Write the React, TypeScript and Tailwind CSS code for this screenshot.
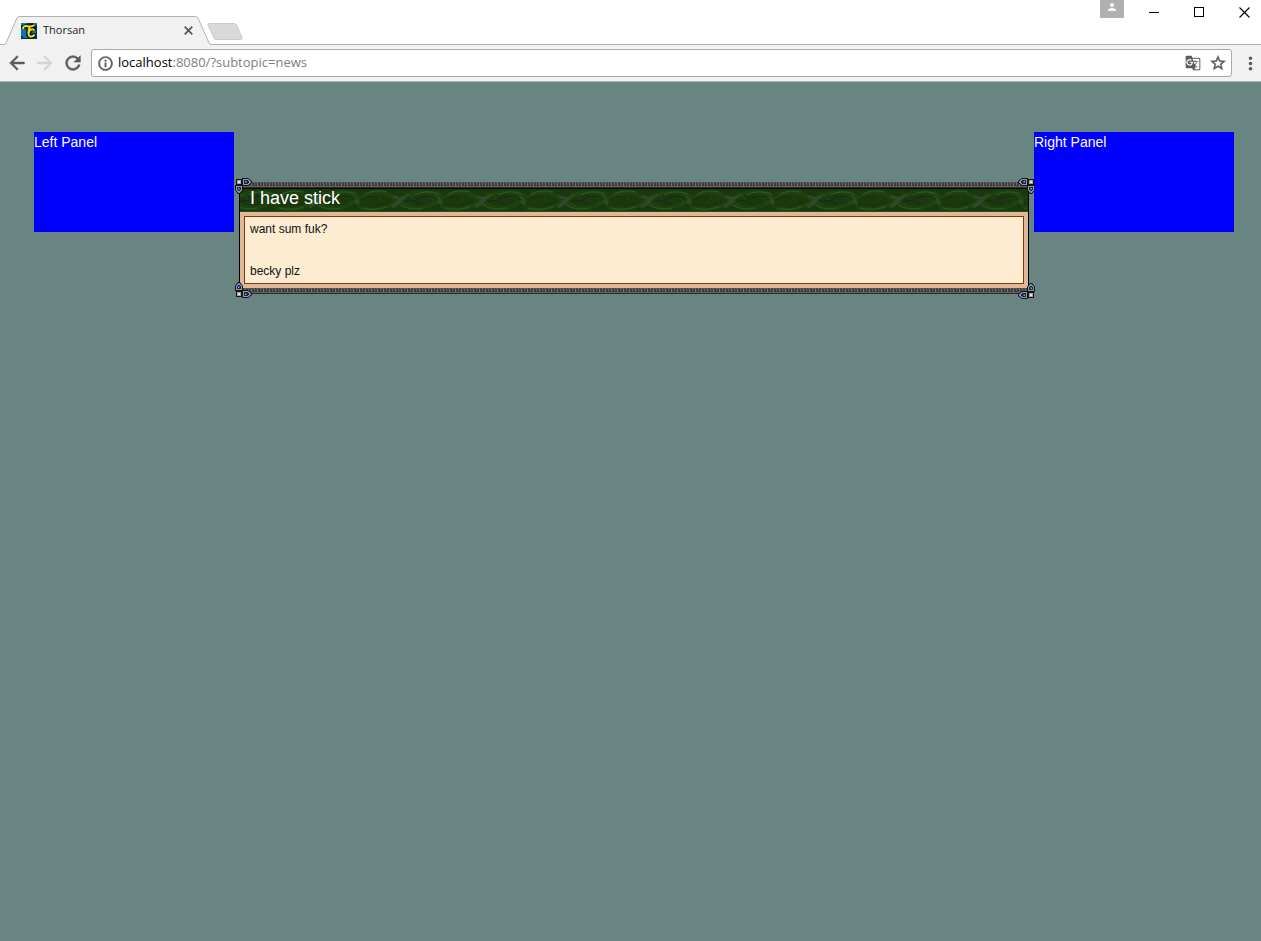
import { useState } from 'react'
import type { ReactNode } from 'react'
import {
  MdArrowBack,
  MdArrowForward,
  MdGTranslate,
  MdInfoOutline,
  MdMoreVert,
  MdPerson,
  MdRefresh,
  MdStarBorder,
} from 'react-icons/md'

const newsItem = {
  title: 'I have stick',
  lines: ['want sum fuk?', '', '', 'becky plz'],
}

// The first path of a material icon is its empty bounding box, which must not get the stroke
const boldIcon = {
  strokeWidth: 0.6,
  className: '[&>path:first-child]:hidden',
}

function Favicon() {
  return (
    <svg width="16" height="16" viewBox="0 0 16 16" aria-hidden="true">
      <rect width="16" height="16" fill="#04304c" />
      <path d="M0 6h5v7h-5zM0 0h6v2h-6zM11 8h4v2h-4zM12 0h4v2h-4zM2 13h4v2h-4z" fill="#0878b0" />
      <g fill="none" stroke="#0a0a00" strokeWidth="3.600">
        <path d="M2 6C2 3.500 4 2.700 6.500 3.200S11 3.800 13.500 2" />
        <path d="M13.500 7.500C12 5.500 8 6 7.500 10C7.300 13 9 13.800 10.500 13.500S13 12.500 13.500 11.500" />
      </g>
      <g fill="none" stroke="#f7dc12" strokeWidth="2">
        <path d="M2 6C2 3.500 4 2.700 6.500 3.200S11 3.800 13.500 2" />
        <path d="M8.500 3.500L7.500 10" />
        <path d="M13.500 7.500C12 5.500 8 6 7.500 10C7.300 13 9 13.800 10.500 13.500S13 12.500 13.500 11.500" />
      </g>
    </svg>
  )
}

function TabStrip() {
  return (
    <div className="flex h-[45px] justify-between border-b border-[#b0b0b0] bg-white">
      <div className="flex items-end pl-1">
        <div className="relative -mb-px h-[29px] w-[207px]">
          <svg
            className="absolute inset-0"
            width="207"
            height="29"
            viewBox="0 0 207 29"
            aria-hidden="true"
          >
            <path d="M0 29L2 27L13 2Q14 .5 15.500 .5H191.500Q193 .5 194 2L205 27L207 29Z" fill="#f1f1f1" />
            <path
              d="M0 28.500Q1.500 28.500 2 27L13 2Q14 .5 15.500 .5H191.500Q193 .5 194 2L205 27Q206 28.500 207 28.500"
              fill="none"
              stroke="#b0b0b0"
            />
          </svg>
          <div className="relative flex h-full items-center pr-[18px] pl-[17px] font-['Open_Sans',sans-serif] text-[11px] text-[#222]">
            <Favicon />
            <span className="ml-1.5 flex-1">Thorsan</span>
            <button type="button" aria-label="Close tab">
              <svg width="9" height="9" viewBox="0 0 9 9" aria-hidden="true">
                <path d="M.7 .7L8.300 8.300M8.300 .7L.7 8.300" stroke="#555" strokeWidth="1.700" />
              </svg>
            </button>
          </div>
        </div>
        <button type="button" aria-label="New tab" className="-ml-1 pb-1">
          <svg width="36" height="17" viewBox="0 0 36 17" aria-hidden="true">
            <path
              d="M2.500 .5H27Q29 .5 29.500 2L35 14.500Q35.500 16.500 33.500 16.500H9Q7.500 16.500 7 15L1 2Q.5 .5 2.500 .5Z"
              fill="#d9d9d9"
              stroke="#cacaca"
            />
          </svg>
        </button>
      </div>

      <div className="flex items-start pr-[11px]">
        <button
          type="button"
          aria-label="Profile"
          className="flex h-[18px] w-6 items-start justify-center bg-[#b0b0b0] pt-px text-white"
        >
          <MdPerson size={12} />
        </button>
        <div className="ml-[25px] flex gap-[34px] pt-[7px]">
          <button type="button" aria-label="Minimize">
            <svg width="11" height="11" aria-hidden="true">
              <path d="M0 5.500h10" stroke="#000" />
            </svg>
          </button>
          <button type="button" aria-label="Maximize">
            <svg width="11" height="11" aria-hidden="true">
              <rect x=".5" y=".5" width="9" height="9" fill="none" stroke="#000" />
            </svg>
          </button>
          <button type="button" aria-label="Close window">
            <svg width="11" height="11" aria-hidden="true">
              <path d="M.5 .5l10 10M10.500 .5l-10 10" stroke="#000" strokeWidth="1.100" />
            </svg>
          </button>
        </div>
      </div>
    </div>
  )
}

function Toolbar() {
  const [path, setPath] = useState(':8080/?subtopic=news')

  return (
    <div className="flex h-[37px] items-center border-b border-[#b6b4b6] bg-[#f1f1f1] pl-1.5 text-[#5a5a5a]">
      <div className="flex gap-1.5">
        <button type="button" aria-label="Back">
          <MdArrowBack size={22} {...boldIcon} />
        </button>
        <button type="button" aria-label="Forward" className="text-[#d3d3d3]">
          <MdArrowForward size={22} {...boldIcon} />
        </button>
        <button type="button" aria-label="Reload">
          <MdRefresh size={22} {...boldIcon} />
        </button>
      </div>
      <div className="ml-[7px] flex h-7 flex-1 items-center rounded-[3px] border border-[#a9a9a9] bg-white pr-1 pl-[5px] font-['Open_Sans',sans-serif] text-[13px]">
        <MdInfoOutline size={17} {...boldIcon} />
        <label htmlFor="address" className="ml-1 text-black">
          localhost
        </label>
        <input
          id="address"
          className="min-w-0 flex-1 text-[#808080] outline-none"
          value={path}
          onChange={(e) => setPath(e.target.value)}
        />
        <button type="button" aria-label="Translate this page">
          <MdGTranslate size={16} />
        </button>
        <button type="button" aria-label="Bookmark this page" className="ml-2">
          <MdStarBorder size={18} {...boldIcon} />
        </button>
      </div>
      <button type="button" aria-label="Menu" className="ml-2">
        <MdMoreVert size={21} />
      </button>
    </div>
  )
}

function SidePanel({ children }: { children: ReactNode }) {
  return (
    <aside className="h-[100px] w-[200px] shrink-0 bg-[#0000ff] text-sm text-white">
      {children}
    </aside>
  )
}

// Metal clamp in the frame corners, drawn for the top left and mirrored for the others
function Corner({ className }: { className: string }) {
  return (
    <svg
      className={`absolute ${className}`}
      width="17"
      height="16"
      viewBox="0 0 17 16"
      aria-hidden="true"
    >
      <path d="M1 1h6v6h-6zM7 0h6l4 3v2l-4 3h-6zM0 7h8v5l-3 4h-2l-3-4z" fill="#141414" />
      <path d="M2 2h4v4h-4z" fill="#a5a5a5" />
      <path d="M3 3h2v2h-2z" fill="#e6e6e6" />
      <path d="M8 1h5l3 2.500v1l-3 2.500h-5zM1 8h6v4l-2.500 3h-1l-2.500-3z" fill="#999" />
      <path d="M9 2h4v1h1v2h-1v1h-4zM2 9h4v3h-1v1h-2v-1h-1z" fill="#1a2340" />
      <path d="M10 3h2v2h-2zM3 10h2v2h-2z" fill="#0b5cf0" />
      <path d="M10 3h1v1h-1zM3 10h1v1h-1z" fill="#58b4ff" />
    </svg>
  )
}

function Chain({ id }: { id: string }) {
  return (
    <svg className="block w-full" height="6" shapeRendering="crispEdges" aria-hidden="true">
      <defs>
        <pattern id={id} width="6" height="6" patternUnits="userSpaceOnUse">
          <rect width="6" height="6" fill="#454545" />
          <rect width="6" height="1" fill="#566361" />
          <rect width="1" height="1" x="1" fill="#3c4241" />
          <rect width="1" height="1" x="4" fill="#3c4241" />
          <rect width="1" height="3" y="1" fill="#707070" />
          <rect width="1" height="2" x="3" y="1" fill="#646464" />
          <rect width="1" height="3" x="2" y="1" fill="#353535" />
          <rect width="1" height="3" x="5" y="1" fill="#3a3a3a" />
          <rect width="6" height="1" y="4" fill="#626262" />
          <rect width="6" height="1" y="5" fill="#2a2a2a" />
        </pattern>
      </defs>
      <rect width="100%" height="6" fill={`url(#${id})`} />
    </svg>
  )
}

function VineTexture() {
  return (
    <svg className="absolute inset-0 h-full w-full" aria-hidden="true">
      <defs>
        <pattern id="vine" x="37" width="83" height="24" patternUnits="userSpaceOnUse">
          <rect width="83" height="24" fill="#1a370d" />
          <g fill="none" stroke="#1e4110" strokeWidth="4">
            <path d="M-4 16C4 4 18 1 31 8S48 22 62 20S78 10 87 12" />
            <path d="M0 20C12 23 28 20 38 13S58 2 72 5S80 12 83 20" />
          </g>
          <g fill="none" stroke="#2c5d1c">
            <path d="M5 6Q15 1 27 4M55 7Q66 1 79 6M40 17Q50 23 63 20M2 20Q14 23 27 19" />
            <path d="M10 9q8-3 11 4M44 5q8 1 9 7M66 9q8 0 8 7M31 17q7-1 10-8" opacity=".4" />
          </g>
          <g fill="none" stroke="#142d09">
            <path d="M0 12Q10 7 18 9M44 14Q54 10 62 17M56 11Q64 7 72 9M14 20Q24 15 29 15" />
          </g>
          <path
            d="M33 7L40 9L50 6L44 11L40 16L34 20L31 19L36 14L38 11L33 10ZM75 7L79 9L82 13V17L76 14L79 12Z"
            fill="#2d4927"
          />
          <rect width="83" height="1" fill="#050b03" />
          <rect y="23" width="83" height="1" fill="#24501a" />
        </pattern>
      </defs>
      <rect width="100%" height="100%" fill="url(#vine)" />
    </svg>
  )
}

function NewsBox() {
  return (
    <article className="relative">
      <Chain id="chain-top" />
      <div className="border-x border-black bg-[#dfb899]">
        <header className="relative h-6 pl-2.5">
          <VineTexture />
          <h1 className="relative text-lg leading-5 text-white">{newsItem.title}</h1>
        </header>
        <div className="p-1">
          <div className="border border-[#7d3c06] bg-[#fdebd2] p-[5px] text-xs leading-[14px] text-[#111]">
            {newsItem.lines.map((line, i) => (
              <p key={i} className="min-h-[14px]">
                {line}
              </p>
            ))}
          </div>
        </div>
      </div>
      <Chain id="chain-bottom" />
      <Corner className="-top-1 -left-1" />
      <Corner className="-top-1 -right-1.5 -scale-x-100" />
      <Corner className="-bottom-1 -left-1 -scale-y-100" />
      <Corner className="-right-1.5 -bottom-[5px] -scale-100" />
    </article>
  )
}

export default function App() {
  return (
    <div className="flex min-h-screen flex-col bg-[#698582] font-['Liberation_Sans',Arial,sans-serif]">
      <TabStrip />
      <Toolbar />
      <main className="flex justify-center pt-[50px] pl-[7px]">
        <SidePanel>Left Panel</SidePanel>
        <section className="w-full max-w-[800px] px-[5px] pt-[50px]">
          <NewsBox />
        </section>
        <SidePanel>Right Panel</SidePanel>
      </main>
    </div>
  )
}
